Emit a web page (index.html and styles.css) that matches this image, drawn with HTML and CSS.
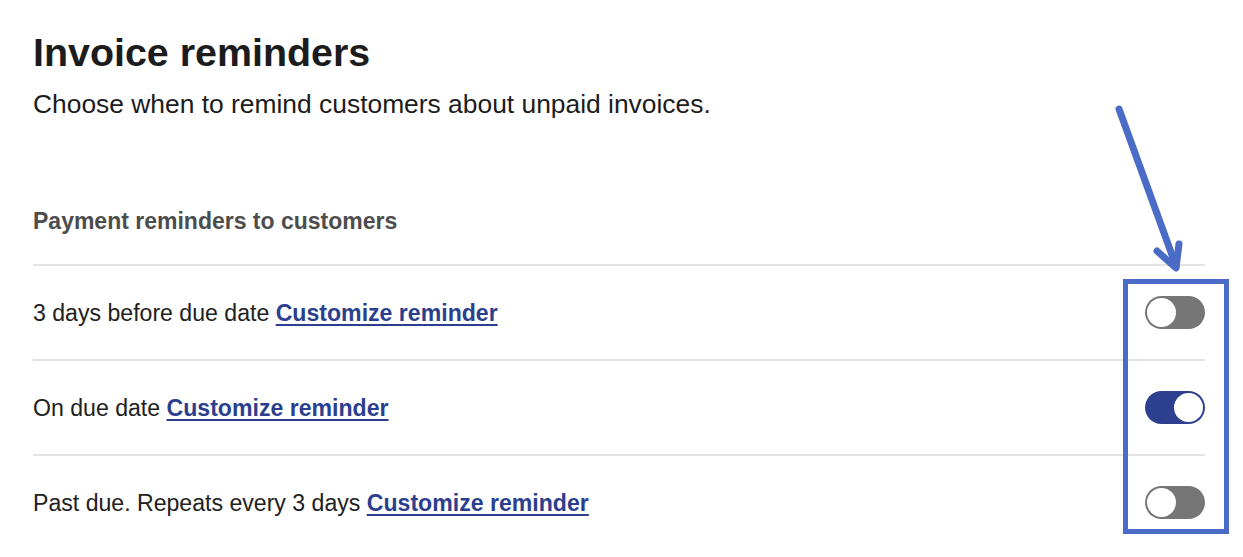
FILE: index.html
```html
<!DOCTYPE html>
<html lang="en">
<head>
<meta charset="utf-8">
<title>Invoice reminders</title>
<link rel="stylesheet" href="styles.css">
</head>
<body>
<main class="page">
  <h1 class="title">Invoice reminders</h1>
  <p class="subtitle">Choose when to remind customers about unpaid invoices.</p>
  <h2 class="section-title">Payment reminders to customers</h2>
  <ul class="list">
    <li class="row">
      <span class="label">3 days before due date <a href="#" class="link">Customize reminder</a></span>
      <span class="toggle"><span class="knob"></span></span>
    </li>
    <li class="row">
      <span class="label">On due date <a href="#" class="link">Customize reminder</a></span>
      <span class="toggle on"><span class="knob"></span></span>
    </li>
    <li class="row">
      <span class="label">Past due. Repeats every 3 days <a href="#" class="link">Customize reminder</a></span>
      <span class="toggle"><span class="knob"></span></span>
    </li>
  </ul>
</main>
<svg class="annotation" width="1243" height="557" viewBox="0 0 1243 557" aria-hidden="true">
  <rect x="1125.5" y="281.5" width="101" height="250" fill="none" stroke="#4a6cc6" stroke-width="5"/>
  <line x1="1119" y1="109" x2="1176" y2="266" stroke="#4a6cc6" stroke-width="7" stroke-linecap="round"/>
  <polyline points="1157,251 1176,268 1179,244" fill="none" stroke="#4a6cc6" stroke-width="7" stroke-linecap="round" stroke-linejoin="round"/>
</svg>
</body>
</html>
```
FILE: styles.css
```css
html, body {
  margin: 0;
  padding: 0;
  background: #ffffff;
}
body {
  font-family: "Liberation Sans", Arial, sans-serif;
  color: #212121;
  position: relative;
  width: 1243px;
  height: 557px;
  overflow: hidden;
}
.page {
  padding: 28px 38px 0 33px;
}
.title {
  margin: 0;
  font-size: 39.4px;
  line-height: 48px;
  font-weight: 700;
  color: #1c1c1c;
}
.subtitle {
  margin: 12px 0 0;
  font-size: 26.4px;
  line-height: 32px;
  color: #1c1c1c;
}
.section-title {
  margin: 87px 0 0;
  font-size: 23px;
  line-height: 28px;
  font-weight: 700;
  color: #4d4d4d;
  padding-bottom: 29px;
}
.list {
  list-style: none;
  margin: 0;
  padding: 0;
}
.row {
  border-top: 2px solid #e3e3e3;
  height: 93px;
  display: flex;
  align-items: center;
  justify-content: space-between;
}
.label {
  font-size: 23.1px;
  line-height: 28px;
  color: #212121;
}
.link {
  color: #2b3f8e;
  font-weight: 700;
  text-decoration: underline;
  text-underline-offset: 3px;
  text-decoration-thickness: 2px;
}
.toggle {
  width: 60px;
  height: 33px;
  border-radius: 17px;
  background: #767676;
  display: flex;
  align-items: center;
  padding: 0 2px;
  box-sizing: border-box;
  justify-content: flex-start;
}
.toggle.on {
  background: #2d3f8f;
  justify-content: flex-end;
}
.knob {
  width: 29px;
  height: 29px;
  border-radius: 50%;
  background: #ffffff;
}
.annotation {
  position: absolute;
  left: 0;
  top: 0;
  pointer-events: none;
}
```
